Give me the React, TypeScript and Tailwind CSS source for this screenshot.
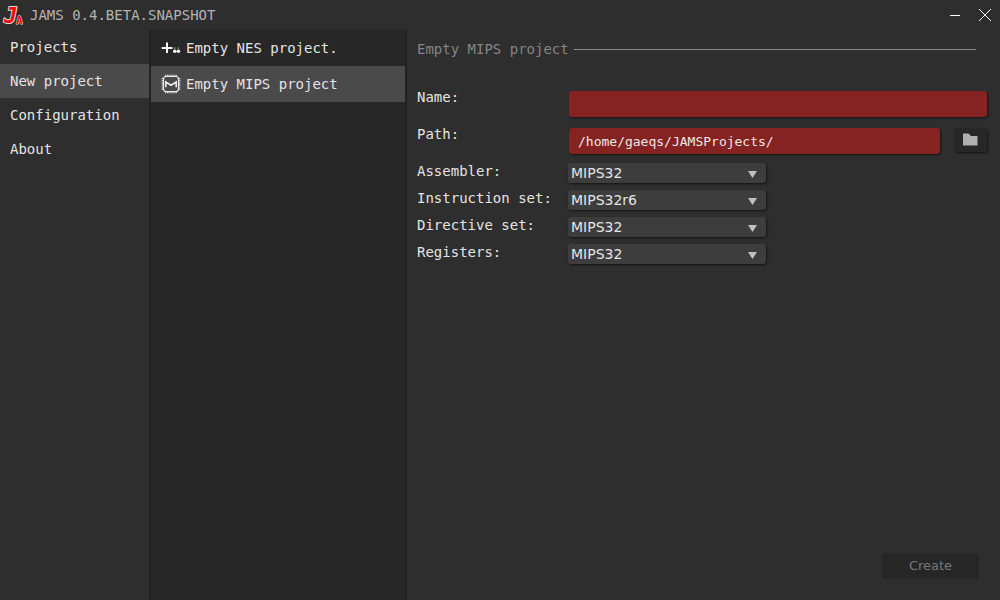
import { useState } from "react";

const mono = "font-['DejaVu_Sans_Mono','Liberation_Mono',monospace]";
const sans = "font-['DejaVu_Sans','Noto_Sans',sans-serif]";

function Logo() {
  return (
    <svg width="26" height="30" viewBox="0 0 26 30" aria-hidden="true">
      <g
        fill="#f00a0a"
        stroke="#e4dcdc"
        strokeLinejoin="round"
        paintOrder="stroke"
        fontFamily="DejaVu Sans Mono"
      >
        <text x="4" y="23" fontSize="22" fontStyle="italic" fontWeight="bold" strokeWidth="2">J</text>
        <text x="16" y="24" fontSize="11" fontWeight="bold" strokeWidth="1">A</text>
      </g>
    </svg>
  );
}

function NesIcon() {
  return (
    <svg width="20" height="20" viewBox="0 0 20 20" fill="#f8f8f8" aria-hidden="true">
      <path d="M5 4.5h2V9h4.5v2H7v4H5v-4H.7V9H5z" />
      <circle cx="13.8" cy="13.2" r="1.8" />
      <circle cx="17.4" cy="13.2" r="1.8" />
      <path d="M13 9.5h1.5v1.2H13zM16.5 9.5H18v1.2h-1.5z" opacity="0.55" />
    </svg>
  );
}

function MipsIcon() {
  return (
    <svg width="20" height="20" viewBox="0 0 20 20" fill="none" stroke="#ececec" aria-hidden="true">
      <rect x="2.5" y="2.5" width="15" height="15" rx="2.5" strokeWidth="1.2" />
      <path
        d="M4 1.3h12M4 18.7h12M1.3 4v12M18.7 4v12"
        strokeWidth="1.2"
        strokeDasharray="1.2 0.9"
      />
      <path d="M4.8 13.2V8l5.2 3.2L15.2 8v5.2" strokeWidth="1.6" />
    </svg>
  );
}

const sections = ["Projects", "New project", "Configuration", "About"];
const templates = [
  { name: "Empty NES project.", icon: <NesIcon /> },
  { name: "Empty MIPS project", icon: <MipsIcon /> },
];
const options = [
  { id: "assembler", label: "Assembler:", value: "MIPS32" },
  { id: "instructions", label: "Instruction set:", value: "MIPS32r6" },
  { id: "directives", label: "Directive set:", value: "MIPS32" },
  { id: "registers", label: "Registers:", value: "MIPS32" },
];

const field =
  "h-[26px] min-w-0 flex-1 rounded-[3px] bg-[#852222] px-[9px] text-[13px] text-[#f0e6e6] shadow-[1px_1px_2px_#151515] outline-none";

export default function App() {
  const [section, setSection] = useState("New project");
  const [template, setTemplate] = useState("Empty MIPS project");
  const [name, setName] = useState("");
  const [path, setPath] = useState("/home/gaeqs/JAMSProjects/");

  return (
    <div className={`${mono} flex min-h-screen flex-col bg-[#2e2e2e] text-[14px] leading-4 text-[#e4e4e4]`}>
      <header className="flex h-[30px] items-center pr-2">
        <Logo />
        <h1 className="ml-1 flex-1 text-[#b4b4b4]">JAMS 0.4.BETA.SNAPSHOT</h1>
        <div className="flex gap-4">
          <button type="button" aria-label="Minimize">
            <svg width="14" height="14" viewBox="0 0 14 14" stroke="#fff">
              <path d="M2 7.5h10" />
            </svg>
          </button>
          <button type="button" aria-label="Close">
            <svg width="14" height="14" viewBox="0 0 14 14" stroke="#fff">
              <path d="M1 1l12 12M13 1L1 13" />
            </svg>
          </button>
        </div>
      </header>

      <div className="flex flex-1">
        <nav className="flex w-[151px] shrink-0 flex-col border-r-2 border-[#222222]">
          {sections.map((s) => (
            <button
              key={s}
              type="button"
              onClick={() => setSection(s)}
              className={`h-[34px] px-2.5 text-left ${s === section ? "bg-[#4a4a4a]" : ""}`}
            >
              {s}
            </button>
          ))}
        </nav>

        <div className="flex w-64 shrink-0 flex-col border-r-2 border-[#222222] bg-[#272727]">
          {templates.map((t) => (
            <button
              key={t.name}
              type="button"
              onClick={() => setTemplate(t.name)}
              className={`flex h-9 items-center gap-[5px] px-2.5 text-left ${t.name === template ? "bg-[#4a4a4a]" : ""}`}
            >
              {t.icon}
              {t.name}
            </button>
          ))}
        </div>

        <form className="flex min-w-0 flex-1 flex-col pt-[11px] pr-[13px] pb-[22px] pl-2.5" onSubmit={(e) => e.preventDefault()}>
          <div className="mb-8 flex items-center gap-[5px] pr-[11px] text-[#858585]">
            <h2>{template}</h2>
            <div className="h-px flex-1 bg-[#8c8c8c]" />
          </div>

          <div className="flex h-[37px] items-start">
            <label htmlFor="name" className="w-[152px] shrink-0">Name:</label>
            <div className="flex flex-1 pt-0.5">
              <input id="name" className={field} value={name} onChange={(e) => setName(e.target.value)} />
            </div>
          </div>
          <div className="flex h-[37px] items-start">
            <label htmlFor="path" className="w-[152px] shrink-0">Path:</label>
            <div className="flex flex-1 gap-3.5 pt-0.5">
              <input id="path" className={field} value={path} onChange={(e) => setPath(e.target.value)} />
              <button
                type="button"
                aria-label="Browse"
                className="flex h-6 w-[33px] items-center justify-center rounded-[3px] bg-[#272727] shadow-[1px_1px_2px_#151515]"
              >
                <svg width="15" height="14" viewBox="0 0 15 14" fill="#b0b0b0">
                  <path d="M0 .5h5.5L8 3h6.5v9.5H0z" />
                </svg>
              </button>
            </div>
          </div>

          {options.map((o) => (
            <div key={o.id} className="flex h-[27px] items-start">
              <label htmlFor={o.id} className="w-[151px] shrink-0">{o.label}</label>
              <div className="relative w-[198px]">
                <select
                  id={o.id}
                  defaultValue={o.value}
                  className={`${sans} h-5 w-full appearance-none rounded-[3px] bg-[#3d3d3d] px-[3px] text-[14px] leading-5 shadow-[1px_1px_2px_#151515] outline-none`}
                >
                  <option>MIPS32</option>
                  <option>MIPS32r6</option>
                </select>
                <svg
                  className="pointer-events-none absolute top-2 right-[9px]"
                  width="9"
                  height="7"
                  viewBox="0 0 9 7"
                  fill="#c0c0c0"
                  aria-hidden="true"
                >
                  <path d="M0 0h9L4.5 7z" />
                </svg>
              </div>
            </div>
          ))}

          <button
            type="submit"
            disabled
            className={`${sans} mt-auto mr-[9px] h-6 w-[95px] self-end rounded-[3px] bg-[#262626] text-[13px] text-[#787878] shadow-[0_0_2px_#222222]`}
          >
            Create
          </button>
        </form>
      </div>
    </div>
  );
}
